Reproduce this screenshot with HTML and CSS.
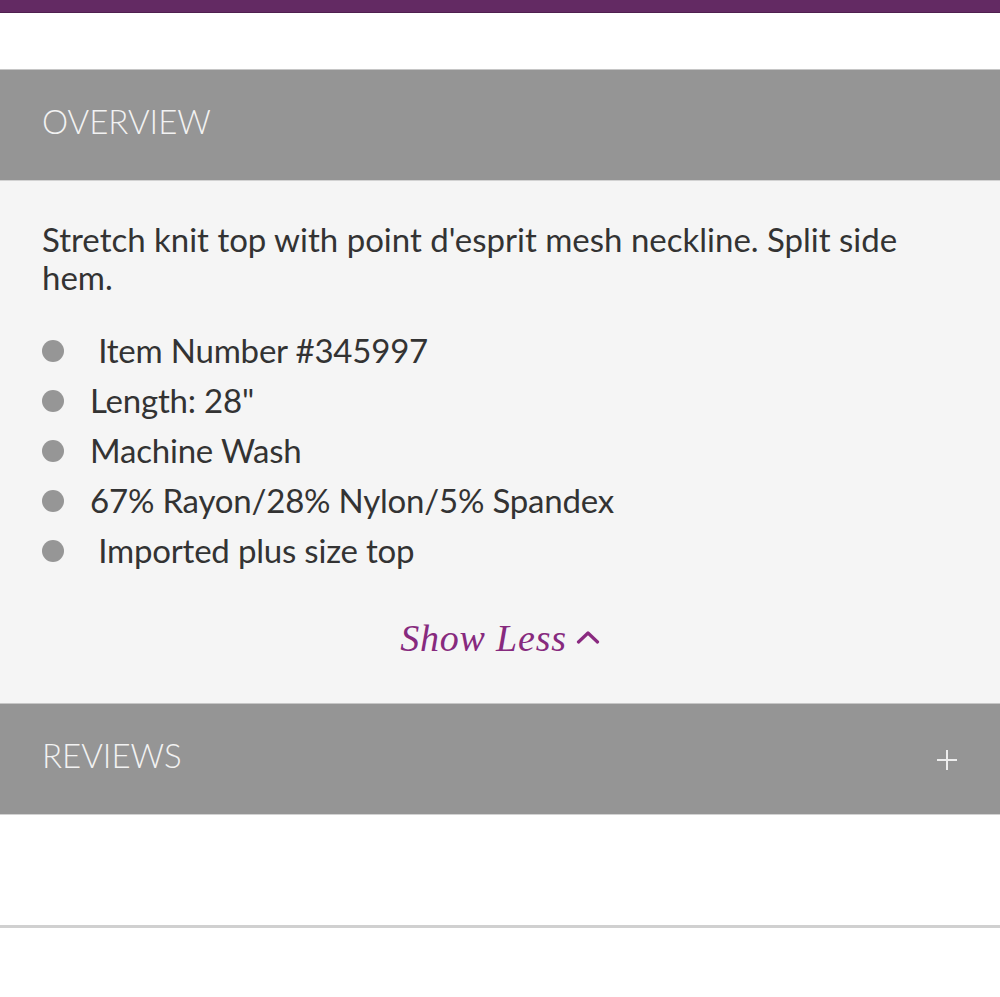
FILE: index.html
```html
<!DOCTYPE html>
<html lang="en">
<head>
<meta charset="utf-8">
<title>Overview</title>
<link rel="stylesheet" href="styles.css">
</head>
<body>
<div class="topbar"></div>
<div class="spacer"></div>
<section class="panel">
  <div class="panel-head">OVERVIEW</div>
  <div class="panel-body">
    <p class="desc">Stretch knit top with point d'esprit mesh neckline. Split side hem.</p>
    <ul class="specs">
      <li><span class="dot"></span><span class="txt">&nbsp;Item Number #345997</span></li>
      <li><span class="dot"></span><span class="txt">Length: 28"</span></li>
      <li><span class="dot"></span><span class="txt">Machine Wash</span></li>
      <li><span class="dot"></span><span class="txt">67% Rayon/28% Nylon/5% Spandex</span></li>
      <li><span class="dot"></span><span class="txt">&nbsp;Imported plus size top</span></li>
    </ul>
    <div class="toggle"><span class="toggle-text">Show Less</span><svg class="caret" width="24" height="14" viewBox="0 0 24 14"><path d="M2.5 12 L12 3 L21.5 12" fill="none" stroke="#8a2a80" stroke-width="3.2" stroke-linecap="round" stroke-linejoin="round"/></svg></div>
  </div>
</section>
<section class="panel">
  <div class="panel-head reviews-head"><span>REVIEWS</span><svg class="plus" width="22" height="22" viewBox="0 0 22 22"><path d="M11 1 V21 M1 11 H21" stroke="#eeeeee" stroke-width="2" fill="none"/></svg></div>
</section>
<div class="after"></div>
<div class="rule"></div>
</body>
</html>
```
FILE: styles.css
```css
html, body {
  margin: 0;
  padding: 0;
  background: #ffffff;
  font-family: Lato, "Open Sans", Arial, sans-serif;
}
.topbar {
  height: 12px;
  background: #632a63;
  border-bottom: 1px solid #4f1f4f;
}
.spacer {
  height: 56px;
}
.panel-head {
  box-sizing: border-box;
  height: 112px;
  background: #959595;
  border-top: 1px solid #c6c6c6;
  border-bottom: 1px solid #d2d2d2;
  color: #f2f2f2;
  font-weight: 300;
  font-size: 33px;
  display: flex;
  align-items: center;
  padding: 0 42px 8px;
}
.reviews-head {
  justify-content: space-between;
  padding-right: 42px;
}
.plus {
  margin-top: 10px;
}
.panel-body {
  background: #f5f5f5;
  padding: 39px 42px 44px;
  color: #333333;
}
.desc {
  margin: 0;
  font-size: 33px;
  line-height: 38px;
  font-weight: 400;
}
.specs {
  list-style: none;
  margin: 29px 0 0;
  padding: 0;
}
.specs li {
  display: flex;
  align-items: center;
  height: 50px;
  font-size: 33px;
  letter-spacing: -0.2px;
}
.dot {
  flex: none;
  width: 22px;
  height: 22px;
  border-radius: 50%;
  background: #969696;
  margin-right: 26px;
  margin-top: 2px;
}
.toggle {
  margin-top: 42px;
  display: flex;
  justify-content: center;
  align-items: center;
  height: 42px;
  color: #872a7e;
}
.toggle-text {
  font-family: "Liberation Serif", "Times New Roman", serif;
  font-style: italic;
  font-size: 38px;
  letter-spacing: 0.8px;
}
.caret {
  margin-left: 9px;
  margin-top: -2px;
}
.after {
  height: 110px;
}
.rule {
  height: 3px;
  background: #d0d0d0;
}
```
